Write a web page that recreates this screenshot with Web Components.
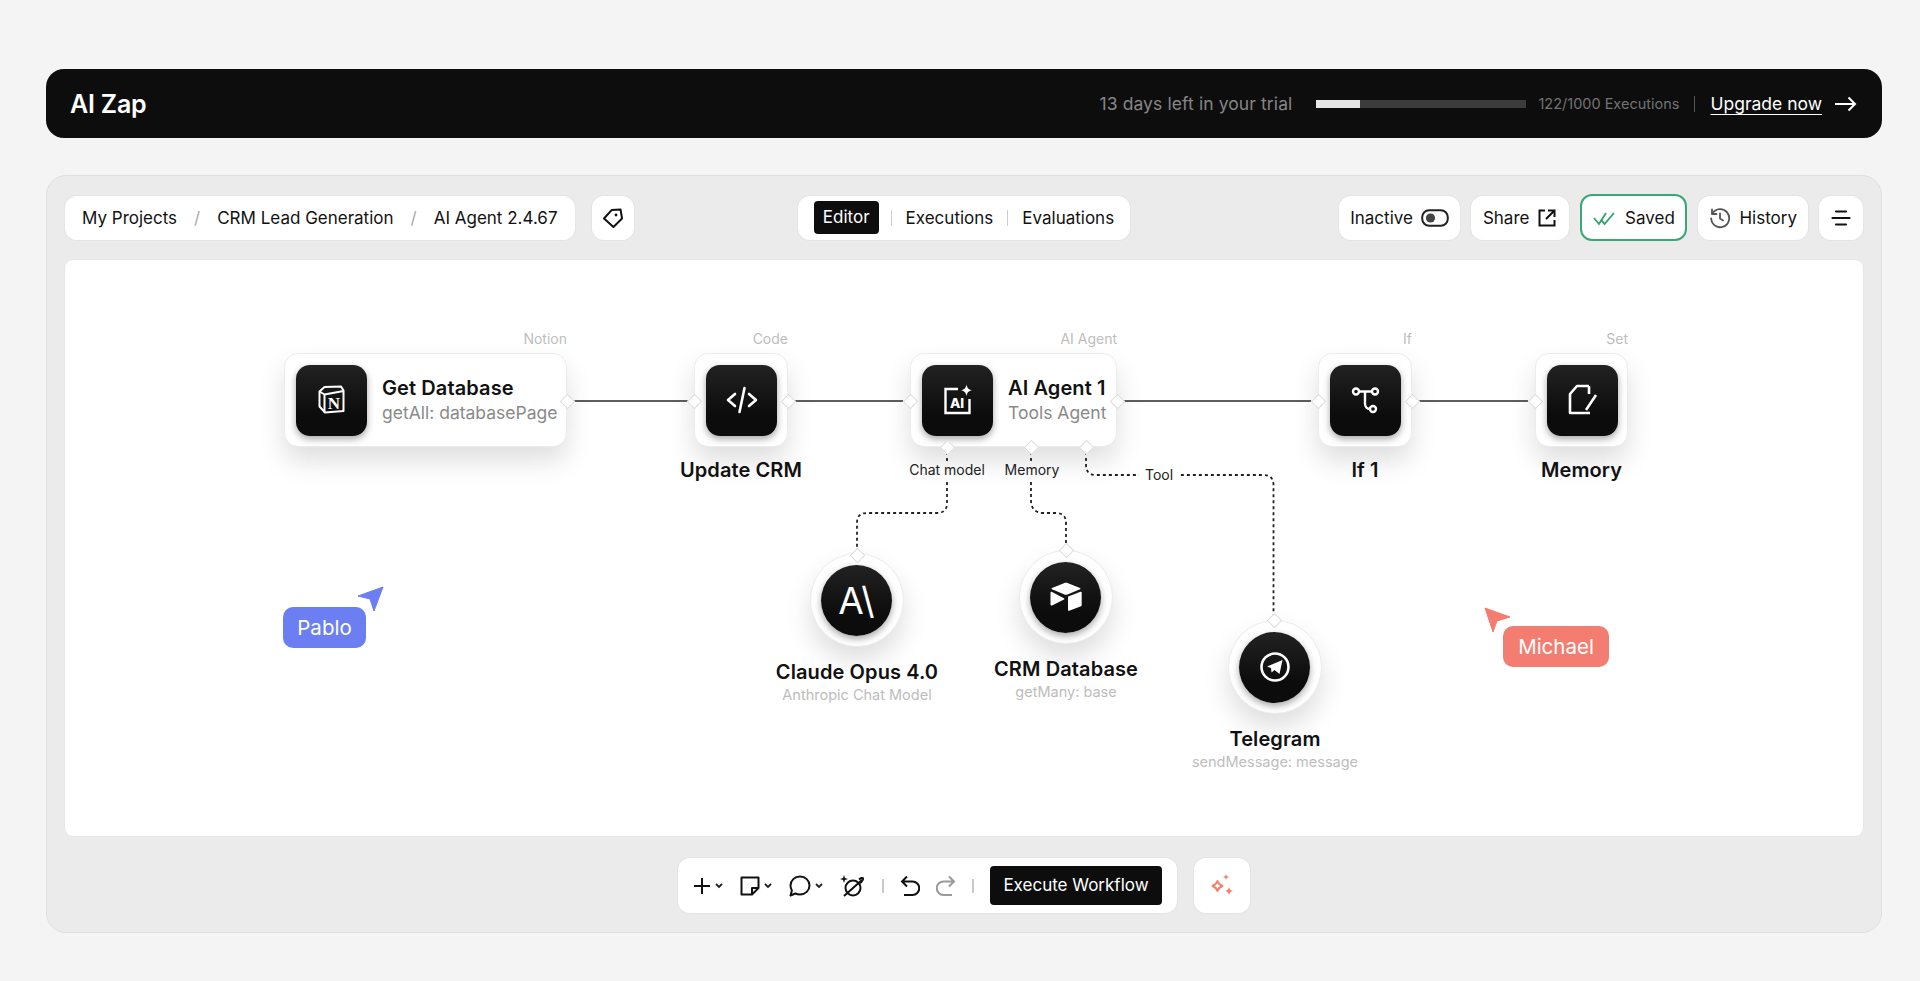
<!DOCTYPE html>
<html lang="en"><head><meta charset="utf-8"><title>AI Zap</title>
<style>
html,body{margin:0;height:100%;background:#f4f4f4;overflow:hidden}
body{font-family:"Inter","Liberation Sans",sans-serif;color:#111}
</style></head>
<body>
<app-shell>
  <trial-banner></trial-banner>
  <editor-panel>
    <top-bar slot="top"></top-bar>
    <flow-canvas slot="canvas"></flow-canvas>
    <bottom-bar slot="bottom"></bottom-bar>
  </editor-panel>
</app-shell>
<script>
const I={
 tag:'<svg width="24" height="24" viewBox="0 0 24 24" fill="none" stroke="#111" stroke-width="2" stroke-linejoin="round"><path d="M3 12 11 4h9l1 9-9 8z" transform="rotate(-3 12 12)"/><circle cx="15" cy="9" r="1.4" fill="#111" stroke="none"/></svg>',
 toggle:'<svg width="28" height="20" viewBox="0 0 28 20" fill="none"><rect x="1.2" y="2.2" width="25.6" height="15.6" rx="7" stroke="#222" stroke-width="2"/><circle cx="9.5" cy="10" r="4.6" fill="#444"/></svg>',
 share:'<svg width="20" height="20" viewBox="0 0 20 20" fill="none" stroke="#111" stroke-width="2"><path d="M8 2.5H2.5v15h15V12"/><path d="M11 2.5h6.500V9M17.500 2.500 9 11"/></svg>',
 check:'<svg width="24" height="16" viewBox="0 0 24 16" fill="none" stroke="#2fa36f" stroke-width="1.800"><path d="M1 8l5 6L13 3"/><path d="M8 9.500l3.500 4.500L21 3"/></svg>',
 history:'<svg width="22" height="22" viewBox="0 0 22 22" fill="none" stroke="#555" stroke-width="1.800" stroke-linecap="round" stroke-linejoin="round"><path d="M3.500 6.500a9 9 0 1 1-1.300 5"/><path d="M3 2.500v4.500h4.500M11 6.500V11.500l3 2"/></svg>',
 menu:'<svg width="20" height="20" viewBox="0 0 20 20" fill="none" stroke="#111" stroke-width="2.200" stroke-linecap="round"><path d="M5 3.500h10M1.500 10h17M5 16.500h10"/></svg>',
 arrow:'<svg width="22" height="16" viewBox="0 0 22 16" fill="none" stroke="#fff" stroke-width="2"><path d="M0 8h20M13.500 1.500 20 8l-6.500 6.500"/></svg>',
 notion:'<svg width="30" height="30" viewBox="0 0 30 30" fill="none" stroke="#fff" stroke-width="2" stroke-linejoin="round"><path d="M2.500 6.500 7.500 2 24 1.500l2.500 4V26L8 27.500l-5.500-6z"/><path d="M2.500 6.500 7.500 9.500 26.500 6M7.500 9.500V27.500"/><text x="17" y="23.500" text-anchor="middle" font-family="Liberation Serif" font-weight="700" font-size="17" fill="#fff" stroke="none">N</text></svg>',
 code:'<svg width="34" height="34" viewBox="0 0 34 34" fill="none" stroke="#fff" stroke-width="2.600" stroke-linecap="round" stroke-linejoin="round"><path d="M10 11 3 17l7 6M24 11l7 6-7 6M19.500 5l-5 24"/></svg>',
 agent:'<svg width="30" height="32" viewBox="0 0 30 32" fill="none"><path d="M15 5H2.500v24h24V15" stroke="#fff" stroke-width="2.400"/><path d="M23.500 0.500c.7 3.500 2 5 5.500 5.800-3.500.8-4.800 2.200-5.500 5.700-.7-3.500-2-4.900-5.500-5.700 3.500-.8 4.800-2.300 5.500-5.800z" fill="#fff"/><text x="14" y="24" text-anchor="middle" font-family="Inter" font-weight="800" font-size="13.500" fill="#fff">AI</text></svg>',
 branch:'<svg width="30" height="30" viewBox="0 0 30 30" fill="none" stroke="#fff" stroke-width="2.400"><circle cx="5" cy="6.500" r="3"/><circle cx="24" cy="6.500" r="3"/><circle cx="22" cy="24" r="3"/><path d="M8 6.500h13M14 6.500v12c0 3 2 5.500 5 5.500"/></svg>',
 edit:'<svg width="30" height="32" viewBox="0 0 30 32" fill="none" stroke="#fff" stroke-width="2.600" stroke-linejoin="round"><path d="M21 2H9L2 10v19h20"/><path d="M21 2v8M28 11 18 26"/></svg>',
 airtable:'<svg width="34" height="30" viewBox="0 0 34 30" fill="#fff"><path d="M15.500 1 3 6c-.6.300-.6 1 0 1.300L15.500 12.500c1 .4 2 .4 3 0L31 7.300c.6-.3.600-1 0-1.300L18.500 1c-1-.4-2-.4-3 0z"/><path d="M19 15v13c0 .7.600 1 1.200.8L32 24.200c.4-.2.700-.5.700-1V10.500c0-.6-.6-1-1.200-.8L19.700 14.200c-.4.200-.7.400-.7.800z"/><path d="M1.500 10.500v12c0 .8.800 1.300 1.500.9L15 17.500c.5-.3.500-1-.1-1.200L2.600 9.700c-.5-.2-1.100.2-1.100.8z"/></svg>',
 telegram:'<svg width="32" height="32" viewBox="0 0 32 32" fill="none"><circle cx="16" cy="16" r="13.500" stroke="#fff" stroke-width="2.600"/><path d="M8 15.500 23.500 9l-3 14-5-4-3 2.500-.5-4.500z" fill="#fff"/></svg>',
 plus:'<svg width="18" height="18" viewBox="0 0 18 18" stroke="#111" stroke-width="2"><path d="M9 1v16M1 9h16"/></svg>',
 chev:'<svg width="10" height="8" viewBox="0 0 10 8" fill="none" stroke="#222" stroke-width="1.800"><path d="M2 2l3 3 3-3"/></svg>',
 note:'<svg width="20" height="20" viewBox="0 0 20 20" fill="none" stroke="#111" stroke-width="2" stroke-linejoin="round"><path d="M1.500 1.500h17V12L12 18.500H1.500z"/><path d="M18.500 12H12v6.500"/></svg>',
 bubble:'<svg width="22" height="22" viewBox="0 0 22 22" fill="none" stroke="#111" stroke-width="2" stroke-linejoin="round"><path d="M11 1.500c5.300 0 9.500 4 9.500 9s-4.200 9-9.500 9c-1.700 0-3.200-.4-4.500-1L1.500 20.500l1.400-5C2 14 1.500 12.300 1.500 10.500c0-5 4.200-9 9.500-9z"/></svg>',
 planet:'<svg width="26" height="24" viewBox="0 0 26 24" fill="none" stroke="#111" stroke-width="2"><circle cx="13" cy="14" r="7.500"/><path d="M4 22 22 6M19 5.500c2-1.500 3.500-2 4-1.300.6.900-.8 2.800-3 5"/><path d="M4 1l1 3 3 1-3 1-1 3-1-3-3-1 3-1z" fill="#111" stroke="none"/></svg>',
 undo:'<svg width="20" height="22" viewBox="0 0 20 22" fill="none" stroke="#111" stroke-width="2"><path d="M7 1.500 2 6.500l5 5M2 6.500h10.500a6 6 0 0 1 0 13.500H4"/></svg>',
 redo:'<svg width="20" height="22" viewBox="0 0 20 22" fill="none" stroke="#9a9a9a" stroke-width="2"><path d="M13 1.500l5 5-5 5M18 6.500H7.500a6 6 0 0 0 0 13.500H16"/></svg>',
 spark:'<svg width="26" height="26" viewBox="0 0 26 26" fill="#f27f70"><path d="M8.500 8c1 3 2 4 5 5-3 1-4 2-5 5-1-3-2-4-5-5 3-1 4-2 5-5z" fill="none" stroke="#f27f70" stroke-width="2" stroke-linejoin="round"/><path d="M17 1c.5 2 1 2.500 3 3-2 .5-2.500 1-3 3-.5-2-1-2.500-3-3 2-.5 2.500-1 3-3zM20 14c.7 2.500 1.500 3.300 4 4-2.500.7-3.300 1.500-4 4-.7-2.500-1.500-3.300-4-4 2.500-.7 3.300-1.500 4-4z"/></svg>'
};
function el(name,html,attrs){customElements.define(name,class extends HTMLElement{
  constructor(){super();this.attachShadow({mode:'open'})}
  connectedCallback(){const a={};for(const k of this.getAttributeNames())a[k]=this.getAttribute(k);this.shadowRoot.innerHTML=typeof html==='function'?html(a):html}
})}
el('app-shell',`<style>:host{display:flex;flex-direction:column;gap:37px;padding:69px 38px 0 46px;height:981px;box-sizing:border-box;background:#f4f4f4}</style><slot></slot>`);

el('trial-banner',`<style>
:host{display:flex;align-items:center;height:69px;flex:none;background:#0d0d0d;border-radius:18px;color:#fff;padding:0 25px 0 24px;box-sizing:border-box}
b{font-size:25px;font-weight:600;letter-spacing:-.2px;flex:1}
.t{font-size:17.500px;color:#868686;letter-spacing:.1px}
.bar{width:210px;height:8px;background:#3b3b3b;margin:0 12px 0 24px}.bar i{display:block;width:44px;height:8px;background:#e6e6e6}
.e{font-size:14.500px;color:#737373}
.s{width:1px;height:16px;background:#555;margin:0 15px}
a{font-size:17.500px;color:#fff;text-decoration:underline;text-underline-offset:4px;margin-right:13px}
svg{display:block}
</style><b>AI Zap</b><span class="t">13 days left in your trial</span><div class="bar"><i></i></div><span class="e">122/1000 Executions</span><div class="s"></div><a>Upgrade now</a>${I.arrow}`);

el('editor-panel',`<style>
:host{display:flex;flex-direction:column;height:758px;flex:none;box-sizing:border-box;background:#ebebeb;border:1px solid #e0e0e0;border-radius:20px;padding:18px 18px 0 18px}
.b{flex:none;display:flex;justify-content:center;margin-top:21px}
</style><slot name="top"></slot><slot name="canvas"></slot><slot name="bottom"></slot>`);

el('white-box',a=>`<style>:host{display:inline-flex;align-items:center;box-sizing:border-box;height:44px;background:#fff;border-radius:12px;box-shadow:0 0 0 1px #e4e4e4;font-size:17px;padding:0 ${a.pad||12}px;gap:${a.gap||8}px;flex:none;color:#111}</style><slot></slot>`);

el('top-bar',`<style>
:host{display:grid;grid-template-columns:1fr auto 1fr;align-items:center;height:44px;flex:none;margin-bottom:22px}
.l,.r{display:flex;align-items:center}
.l{gap:17px}.r{justify-content:flex-end;gap:11px}
.sl{color:#aaa;margin:0 5px}
.d{width:1px;height:16px;background:#ccc;margin:0 14px}
.ed{background:#0d0d0d;color:#fff;border-radius:4px;height:33px;line-height:33px;padding:0 9px;margin-right:-2px}
.saved{height:47px;box-shadow:none;border:2px solid #3aa877;}
.sv{display:inline-flex;align-items:center;gap:8px;box-sizing:border-box;height:47px;width:107px;justify-content:center;background:#fff;border:2px solid #39a877;border-radius:12px;font-size:17px;color:#111}
svg{display:block}
</style>
<div class="l"><white-box pad="17" gap="12">My Projects<span class="sl">/</span>CRM Lead Generation<span class="sl">/</span>AI Agent 2.4.67</white-box><white-box pad="9">${I.tag}</white-box></div>
<white-box pad="16" gap="0" style="margin:0"><span class="ed">Editor</span><span class="d"></span>Executions<span class="d"></span>Evaluations</white-box>
<div class="r"><white-box pad="11">Inactive${I.toggle}</white-box><white-box pad="12">Share${I.share}</white-box><span class="sv">${I.check}Saved</span><white-box pad="11">${I.history}History</white-box><white-box pad="12">${I.menu}</white-box></div>`);

el('flow-port',a=>`<style>:host{position:absolute;left:${a.x}px;top:${a.y}px;width:9px;height:9px;margin:-5.5px;background:#fff;border:1px solid #ddd;transform:rotate(45deg);z-index:3}</style>`);

el('flow-node',a=>{
 const wide=a.kind==='wide',round=a.kind==='round';
 return `<style>
 :host{position:absolute;left:${a.x}px;top:${a.y}px;width:${a.w}px;z-index:2;display:block}
 .box{box-sizing:border-box;width:${a.w}px;height:94px;background:#fff;border:1px solid #ececec;border-radius:${round?'50%':'14px'};box-shadow:0 14px 26px rgba(0,0,0,.13);display:flex;align-items:center;padding:0 0 0 ${round?10:11}px;gap:${a.gap||14}px}
 .ic{width:71px;height:71px;flex:none;border-radius:${round?'50%':'14px'};background:linear-gradient(#222,#0c0c0c 70%);box-shadow:0 3px 7px rgba(0,0,0,.35);display:flex;align-items:center;justify-content:center;color:#fff;font-size:37px;font-weight:400}
 svg{display:block}
 .tt{font-size:20px;font-weight:600;line-height:26px;white-space:nowrap;letter-spacing:.1px}
 .st{font-size:17.500px;color:#8a8a8a;line-height:24px;white-space:nowrap}
 .ty{position:absolute;right:0;top:-23px;font-size:14px;line-height:18px;color:#bdbdbd;white-space:nowrap}
 .ext{position:absolute;left:50%;transform:translateX(-50%);top:${round?106:104}px;text-align:center;white-space:nowrap}
 .ext .tt{line-height:26px}
 .ext .st{font-size:14.500px;color:#bdbdbd;line-height:20px}
 </style>
 ${a.type?`<div class="ty">${a.type}</div>`:''}
 <div class="box"><div class="ic">${a.glyph?a.glyph:I[a.icon]}</div>${wide?`<div><div class="tt">${a.title}</div><div class="st">${a.sub}</div></div>`:''}</div>
 ${!wide?`<div class="ext"><div class="tt">${a.title}</div>${a.sub?`<div class="st">${a.sub}</div>`:''}</div>`:''}`;
});

el('edge-label',a=>`<style>:host{position:absolute;left:${a.x}px;top:${a.y}px;transform:translate(-50%,-50%);font-size:14px;line-height:18px;padding:0 ${a.pad||3}px;background:#fff;color:#222;white-space:nowrap;z-index:1}</style><slot></slot>`);

el('cursor-tag',a=>`<style>
:host{position:absolute;left:${a.x}px;top:${a.y}px;width:${a.w}px;height:41px;border-radius:10px;background:${a.c};color:#fff;font-size:20.500px;display:flex;align-items:center;justify-content:center;z-index:4}
svg{position:absolute;overflow:visible}
</style><slot></slot>${a.side==='r'?`<svg style="left:73px;top:-20px" width="28" height="28" viewBox="0 0 28 28"><path d="M2 9 27 0l-9 24-4-12z" fill="${a.c}" stroke="${a.c}" stroke-linejoin="round"/></svg>`:`<svg style="left:-19px;top:-19px" width="28" height="28" viewBox="0 0 28 28"><path d="M1 1l25 9-13 4-4 11z" fill="${a.c}" stroke="${a.c}" stroke-linejoin="round"/></svg>`}`);

el('flow-canvas',`<style>
:host{display:block;position:relative;height:576px;flex:none;background:#fff;border-radius:8px;box-shadow:0 0 0 1px #e6e6e6}
svg.w{position:absolute;left:0;top:0;width:100%;height:100%;overflow:visible}
</style>
<svg class="w" fill="none">
 <g stroke="#2a2a2a" stroke-width="1.700"><path d="M507 141H623M729 141H838M1059 141H1246M1354 141H1463"/></g>
 <g stroke="#222" stroke-width="1.800" stroke-dasharray="3 3">
  <path d="M882 192V243q0 10-10 10H802q-10 0-10 10V287"/>
  <path d="M966 192V240q0 13 13 13H991q10 0 10 10V285"/>
  <path d="M1021 192V205q0 10 10 10H1198.500q10 0 10 10V355"/>
 </g>
</svg>
<flow-node kind="wide" x="219" y="93" w="283" icon="notion" title="Get Database" sub="getAll: databasePage" type="Notion" gap="15"></flow-node>
<flow-node kind="sq" x="629" y="93" w="94" icon="code" title="Update CRM" type="Code"></flow-node>
<flow-node kind="wide" x="845" y="93" w="207" icon="agent" title="AI Agent 1" sub="Tools Agent" type="AI Agent" gap="15"></flow-node>
<flow-node kind="sq" x="1253" y="93" w="94" icon="branch" title="If 1" type="If"></flow-node>
<flow-node kind="sq" x="1470" y="93" w="93" icon="edit" title="Memory" type="Set"></flow-node>
<flow-node kind="round" x="745" y="293" w="94" glyph="A\\" title="Claude Opus 4.0" sub="Anthropic Chat Model"></flow-node>
<flow-node kind="round" x="954" y="290" w="94" icon="airtable" title="CRM Database" sub="getMany: base"></flow-node>
<flow-node kind="round" x="1163" y="360" w="94" icon="telegram" title="Telegram" sub="sendMessage: message"></flow-node>
<flow-port x="502" y="141"></flow-port><flow-port x="629" y="141"></flow-port><flow-port x="723" y="141"></flow-port><flow-port x="845" y="141"></flow-port><flow-port x="1052" y="141"></flow-port><flow-port x="1253" y="141"></flow-port><flow-port x="1347" y="141"></flow-port><flow-port x="1470" y="141"></flow-port>
<flow-port x="882" y="187"></flow-port><flow-port x="966" y="187"></flow-port><flow-port x="1021" y="187"></flow-port>
<flow-port x="792" y="295"></flow-port><flow-port x="1001" y="290"></flow-port><flow-port x="1209" y="360"></flow-port>
<edge-label x="882" y="210">Chat model</edge-label><edge-label x="967" y="210">Memory</edge-label><edge-label x="1094" y="215" pad="6">Tool</edge-label>
<cursor-tag x="218" y="347" w="83" c="#6b7ff2" side="r">Pablo</cursor-tag>
<cursor-tag x="1438" y="366" w="106" c="#f37d70" side="l">Michael</cursor-tag>`);

el('bottom-bar',`<style>
:host{display:flex;justify-content:center;gap:17px;margin-top:22px;flex:none}
.g{display:flex;align-items:center;gap:3px}
.d{width:2px;height:14px;background:#c9c9c9}
.x{background:#0d0d0d;color:#fff;border-radius:4px;height:39px;line-height:39px;padding:0 13px;font-size:17px}
svg{display:block}
white-box{height:55px}
</style>
<white-box pad="15" gap="16"><span class="g">${I.plus}${I.chev}</span><span class="g">${I.note}${I.chev}</span><span class="g">${I.bubble}${I.chev}</span>${I.planet}<span class="d"></span>${I.undo}${I.redo}<span class="d"></span><span class="x">Execute Workflow</span></white-box><white-box pad="15">${I.spark}</white-box>`);
</script>
</body></html>
